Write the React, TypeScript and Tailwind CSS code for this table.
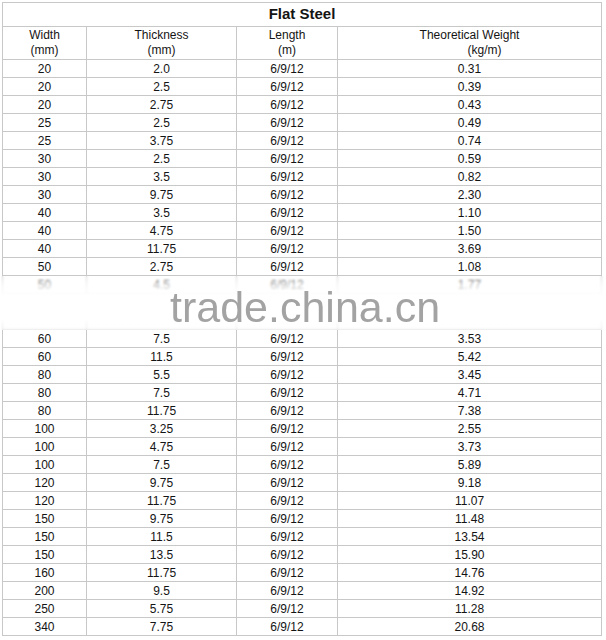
const rows: [string, string, string][] = [
  ['20', '2.0', '0.31'],
  ['20', '2.5', '0.39'],
  ['20', '2.75', '0.43'],
  ['25', '2.5', '0.49'],
  ['25', '3.75', '0.74'],
  ['30', '2.5', '0.59'],
  ['30', '3.5', '0.82'],
  ['30', '9.75', '2.30'],
  ['40', '3.5', '1.10'],
  ['40', '4.75', '1.50'],
  ['40', '11.75', '3.69'],
  ['50', '2.75', '1.08'],
  ['50', '4.5', '1.77'],
  ['', '', ''],
  ['', '', ''],
  ['60', '7.5', '3.53'],
  ['60', '11.5', '5.42'],
  ['80', '5.5', '3.45'],
  ['80', '7.5', '4.71'],
  ['80', '11.75', '7.38'],
  ['100', '3.25', '2.55'],
  ['100', '4.75', '3.73'],
  ['100', '7.5', '5.89'],
  ['120', '9.75', '9.18'],
  ['120', '11.75', '11.07'],
  ['150', '9.75', '11.48'],
  ['150', '11.5', '13.54'],
  ['150', '13.5', '15.90'],
  ['160', '11.75', '14.76'],
  ['200', '9.5', '14.92'],
  ['250', '5.75', '11.28'],
  ['340', '7.75', '20.68'],
];

const cell = 'flex items-center justify-center border-r border-b border-[#c8c8c8]';

export default function App() {
  return (
    <div className="min-h-[640px] w-[606px] bg-white p-[2px] font-['Liberation_Sans',Arial,sans-serif] text-[12px] text-[#141414]">
      <div className="relative w-[600px] border-l border-t border-[#c8c8c8]">
        {/* title */}
        <div className="flex h-[24px] items-center justify-center border-r border-b border-[#c8c8c8] text-[15px] font-bold">
          Flat Steel
        </div>

        <div className="grid grid-cols-[84px_150px_101px_264px]">
          {/* header */}
          <div className={`${cell} h-[33px] flex-col leading-[15px]`}>
            <span>Width</span>
            <span>(mm)</span>
          </div>
          <div className={`${cell} h-[33px] flex-col leading-[15px]`}>
            <span>Thickness</span>
            <span>(mm)</span>
          </div>
          <div className={`${cell} h-[33px] flex-col leading-[15px]`}>
            <span>Length</span>
            <span>(m)</span>
          </div>
          <div className={`${cell} h-[33px] flex-col leading-[15px]`}>
            <span>Theoretical Weight</span>
            <span className="pl-[30px]">(kg/m)</span>
          </div>

          {rows.map(([w, t, kg], i) => (
            <div key={i} className="contents">
              <div className={`${cell} h-[18px]`}>{w}</div>
              <div className={`${cell} h-[18px]`}>{t}</div>
              <div className={`${cell} h-[18px]`}>{w ? '6/9/12' : ''}</div>
              <div className={`${cell} h-[18px]`}>{kg}</div>
            </div>
          ))}
        </div>

        {/* watermark */}
        <div className="absolute left-[-2px] right-[-2px] top-[273px] h-[54px] bg-[linear-gradient(to_bottom,rgba(255,255,255,0.2)_0px,rgba(255,255,255,0.75)_10px,#fff_22px,#fff_42px,rgba(255,255,255,0.55)_54px)] backdrop-blur-[1px]">
          <span className="absolute left-[169px] top-[10px] whitespace-nowrap font-['Liberation_Sans',Arial,sans-serif] text-[43px] leading-[43px] text-[#a3a3a3]">
            trade.china.cn
          </span>
        </div>
      </div>
    </div>
  );
}
